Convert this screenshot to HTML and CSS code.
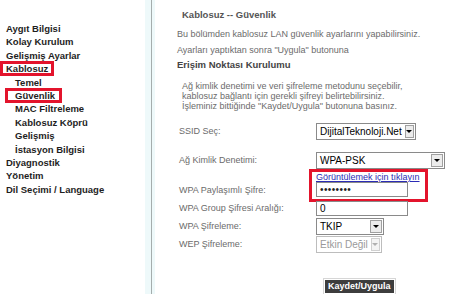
FILE: index.html
```html
<!DOCTYPE html>
<html lang="tr">
<head>
    <meta charset="UTF-8">
    <title>Kablosuz -- Güvenlik</title>
    <link rel="stylesheet" href="styles.css">
</head>
<body>
    <div class="page">
        <!-- Menü -->
        <div class="sidebar">
            <ul class="menu">
                <li>Aygıt Bilgisi</li>
                <li>Kolay Kurulum</li>
                <li>Gelişmiş Ayarlar</li>
                <li><span class="mark mark-main">Kablosuz</span></li>
                <li class="sub">Temel</li>
                <li class="sub"><span class="mark mark-sub">Güvenlik</span></li>
                <li class="sub">MAC Filtreleme</li>
                <li class="sub">Kablosuz Köprü</li>
                <li class="sub">Gelişmiş</li>
                <li class="sub">İstasyon Bilgisi</li>
                <li>Diyagnostik</li>
                <li>Yönetim</li>
                <li>Dil Seçimi / Language</li>
            </ul>
        </div>
        <div class="divider"></div>

        <!-- İçerik -->
        <div class="content">
            <h1>Kablosuz -- Güvenlik</h1>
            <p class="intro">Bu bölümden kablosuz LAN güvenlik ayarlarını yapabilirsiniz.</p>
            <p class="intro">Ayarları yaptıktan sonra "Uygula" butonuna</p>
            <h2>Erişim Noktası Kurulumu</h2>
            <p class="help">Ağ kimlik denetimi ve veri şifreleme metodunu seçebilir,<br>kablosuz bağlantı için gerekli şifreyi belirtebilirsiniz.<br>İşleminiz bittiğinde "Kaydet/Uygula" butonuna basınız.</p>

            <div class="form">
                <span class="label">SSID Seç:</span>
                <div class="select select-ssid"><span class="value">DijitalTeknoloji.Net</span><span class="arrow"></span></div>
                <div class="spacer"></div>

                <span class="label">Ağ Kimlik Denetimi:</span>
                <div class="select select-auth"><span class="value">WPA-PSK</span><span class="arrow"></span></div>

                <span></span>
                <div class="mark-box">
                    <a href="#" class="show-link">Görüntülemek için tıklayın</a>
                    <div class="field field-pass">••••••••</div>
                </div>
                <span class="label">WPA Paylaşımlı Şifre:</span>

                <span class="label">WPA Group Şifresi Aralığı:</span>
                <div class="field">0</div>

                <span class="label">WPA Şifreleme:</span>
                <div class="select select-enc"><span class="value">TKIP</span><span class="arrow"></span></div>

                <span class="label">WEP Şifreleme:</span>
                <div class="select select-wep disabled"><span class="value">Etkin Değil</span><span class="arrow"></span></div>
            </div>

            <div class="actions">
                <button class="save">Kaydet/Uygula</button>
            </div>
        </div>
    </div>
</body>
</html>
```

FILE: styles.css
```css
/* Reset */
* {
    margin: 0;
    padding: 0;
    box-sizing: border-box;
}

body {
    font-family: "Liberation Sans", Arial, sans-serif;
    background-color: #ffffff;
}

.page {
    display: flex;
    height: 294px;
    overflow: hidden;
}

/* Menü */
.sidebar {
    width: 145px;
    padding: 22px 0 0 6px;
}

.menu {
    list-style: none;
    font-size: 9.5px;
    font-weight: bold;
    line-height: 13.4px;
    color: #1e1e1e;
}

.menu .sub {
    padding-left: 9px;
}

.mark {
    display: inline-block;
    line-height: 9px;
    outline: 3px solid #e3142c;
}

.mark-main {
    padding: 0 3px;
    margin-left: -3px;
}

.mark-sub {
    padding: 0 4px 0 7px;
    margin-left: -7px;
}

.divider {
    width: 10px;
    background: linear-gradient(to right, #eef9fa 0 6px, #a5adad 6px 7px, #eef9fa 7px);
}

/* İçerik */
.content {
    flex: 1;
    padding: 9px 0 0 22px;
    font-size: 9px;
    color: #6b6b6b;
}

.content h1 {
    font-size: 9.5px;
    line-height: 12px;
    padding-left: 5px;
    color: #555555;
}

.intro {
    line-height: 12px;
    margin-top: 7px;
}

.intro + .intro {
    margin-top: 4px;
}

.content h2 {
    font-size: 9.5px;
    line-height: 12px;
    margin-top: 3px;
    color: #444444;
}

.help {
    line-height: 10px;
    margin-top: 10px;
    padding-left: 5px;
}

/* Form */
.form {
    display: grid;
    grid-template-columns: 137px auto;
    grid-template-rows: 18px 11px 18px 12px 18px 18px 18px 18px;
    align-items: center;
    justify-items: start;
    margin: 11px 0 0 2px;
}

.spacer {
    grid-column: span 2;
}

.select {
    display: flex;
    align-items: center;
    height: 17px;
    border: 1px solid #8a8a8a;
    background: #ffffff;
    font-size: 10px;
    color: #000000;
}

.select .value {
    flex: 1;
    padding: 0 3px;
    white-space: nowrap;
}

.select .arrow {
    display: flex;
    align-items: center;
    justify-content: center;
    width: 12px;
    height: 13px;
    margin-right: 1px;
    border: 1px solid #a0a0a0;
    background: #ececec;
}

.select .arrow::after {
    content: "";
    border-left: 3px solid transparent;
    border-right: 3px solid transparent;
    border-top: 3px solid #000000;
}

.select-ssid { width: 100px; }
.select-auth { width: 129px; }
.select-enc { width: 68px; }
.select-wep { width: 66px; }

.select.disabled {
    border-color: #bdbdbd;
    color: #9a9a9a;
}

.select.disabled .arrow {
    border-color: #d0d0d0;
    background: #f4f4f4;
}

.select.disabled .arrow::after {
    border-top-color: #b0b0b0;
}

.mark-box {
    grid-row: span 2;
    align-self: start;
    width: 119px;
    margin-left: -7px;
    padding: 0 0 2px 4px;
    border: 3px solid #e3142c;
}

.show-link {
    display: block;
    line-height: 10px;
    color: #2b2bb5;
    font-size: 9px;
}

.field {
    width: 92px;
    height: 15px;
    border: 1px solid #8a8a8a;
    padding: 0 3px;
    font-size: 10px;
    line-height: 13px;
    color: #000000;
}

.field-pass {
    font-size: 10px;
    letter-spacing: 0.4px;
    color: #222222;
}

.actions {
    margin: 27px 0 0 148px;
}

.save {
    font-family: "Liberation Sans", Arial, sans-serif;
    font-size: 9px;
    font-weight: bold;
    line-height: 13px;
    padding: 0 3px;
    border: none;
    background: #3d3d3d;
    color: #ffffff;
    outline: 1px solid #d6d6d6;
    outline-offset: 1px;
}
```
